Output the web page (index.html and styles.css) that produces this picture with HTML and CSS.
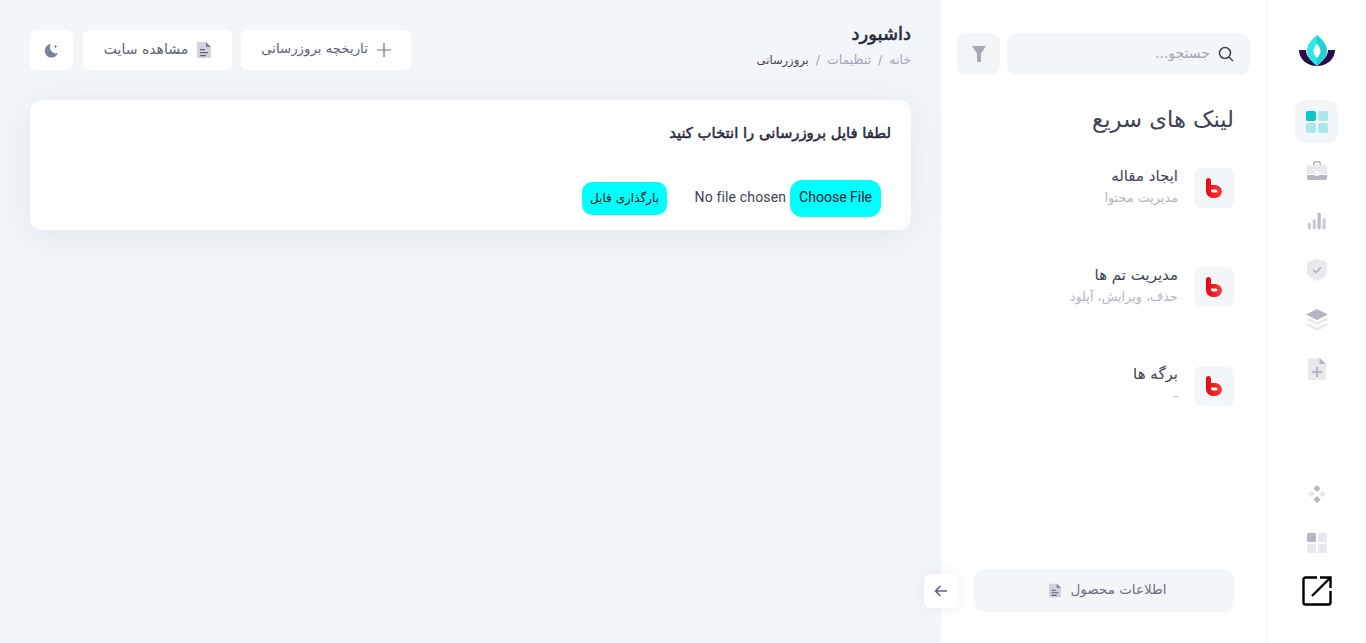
FILE: index.html
```html
<!DOCTYPE html>
<html lang="fa" dir="rtl">
<head>
  <meta charset="UTF-8" />
  <meta name="viewport" content="width=device-width, initial-scale=1.0"/>
  <title>داشبورد</title>
  <link rel="stylesheet" href="styles.css">
</head>

<body>
  <aside class="rail">
    <a class="logo" href="#">
      <svg width="38" height="33" viewBox="0 0 38 33">
        <path d="M1 16h7c0 6 5 11 11 15 6-4 11-9 11-15h7c0 9-8 16-18 16S1 25 1 16z" fill="#2b0a45"/>
        <path d="M19 1C13 6 9 11 9 17c0 6 5 11 10 15z" fill="#2ee6e6"/>
        <path d="M19 1c6 5 10 10 10 16 0 6-5 11-10 15z" fill="#22cfd2"/>
        <path d="M19 10c-2.500 2.500-3.500 5-3.500 7s1 4.500 3.500 7c2.500-2.500 3.500-5 3.500-7s-1-4.500-3.500-7z" fill="#fff"/>
      </svg>
    </a>
    <nav class="rail-nav">
      <a class="rail-btn active" href="#">
        <svg width="24" height="24" viewBox="0 0 24 24">
          <rect x="1" y="1" width="10" height="10" rx="2" fill="#0bc5c9"/>
          <rect x="13" y="1" width="10" height="10" rx="2" fill="#0bc5c9" opacity=".3"/>
          <rect x="1" y="13" width="10" height="10" rx="2" fill="#0bc5c9" opacity=".3"/>
          <rect x="13" y="13" width="10" height="10" rx="2" fill="#0bc5c9" opacity=".3"/>
        </svg>
      </a>
      <a class="rail-btn" href="#">
        <svg width="24" height="24" viewBox="0 0 24 24">
          <path d="M8 6V4.500C8 3 9 2 10.500 2h3C15 2 16 3 16 4.500V6h-1.500V4.500c0-.6-.4-1-1-1h-3c-.6 0-1 .4-1 1V6z" fill="#b5b5c3"/>
          <path d="M2 8c0-1.100.9-2 2-2h16c1.100 0 2 .9 2 2v7H2z" fill="#b5b5c3" opacity=".3"/>
          <path d="M2 16h20v3c0 1.100-.9 2-2 2H4c-1.100 0-2-.9-2-2z" fill="#b5b5c3"/>
          <rect x="10" y="12" width="4" height="5" rx="1" fill="#fff"/>
        </svg>
      </a>
      <a class="rail-btn" href="#">
        <svg width="22" height="22" viewBox="0 0 24 24">
          <rect x="2" y="14" width="3.500" height="7" rx="1.500" fill="#b5b5c3" opacity=".7"/>
          <rect x="7.300" y="10" width="3.500" height="11" rx="1.500" fill="#b5b5c3" opacity=".7"/>
          <rect x="12.600" y="3" width="3.500" height="18" rx="1.500" fill="#b5b5c3" opacity=".9"/>
          <rect x="18" y="9" width="3.500" height="12" rx="1.500" fill="#b5b5c3" opacity=".7"/>
        </svg>
      </a>
      <a class="rail-btn" href="#">
        <svg width="24" height="24" viewBox="0 0 24 24">
          <path d="M12 1l10 3v10c0 4-5 7-10 9C7 21 2 18 2 14V4z" fill="#b5b5c3" opacity=".3"/>
          <path d="M8 12l3 2.500 5-5" fill="none" stroke="#b5b5c3" stroke-width="1.800"/>
        </svg>
      </a>
      <a class="rail-btn" href="#">
        <svg width="24" height="24" viewBox="0 0 24 24">
          <path d="M12 1l11 5.500-11 5.500L1 6.500z" fill="#b5b5c3"/>
          <path d="M3.500 10L12 14.300 20.500 10 23 11.500 12 17 1 11.500z" fill="#b5b5c3" opacity=".3"/>
          <path d="M3.500 15.500L12 19.800l8.500-4.300 2.500 1.500L12 23 1 17z" fill="#b5b5c3" opacity=".3"/>
        </svg>
      </a>
      <a class="rail-btn" href="#">
        <svg width="24" height="24" viewBox="0 0 24 24">
          <path d="M4 1h11l6 6v15c0 .6-.4 1-1 1H4c-.6 0-1-.4-1-1V2c0-.6.4-1 1-1z" fill="#b5b5c3" opacity=".3"/>
          <path d="M14.500 1L21 7h-6.500z" fill="#b5b5c3"/>
          <path d="M11 10h2v4h4v2h-4v4h-2v-4H7v-2h4z" fill="#b5b5c3"/>
        </svg>
      </a>
    </nav>
    <div class="rail-bottom">
      <a class="rail-btn" href="#">
        <svg width="20" height="20" viewBox="0 0 20 20">
          <path d="M10 1l3.500 3.500L10 8 6.500 4.500z" fill="#b5b5c3"/>
          <path d="M10 12l3.500 3.500L10 19l-3.500-3.500z" fill="#b5b5c3"/>
          <path d="M4.500 6.500L8 10l-3.500 3.500L1 10z" fill="#b5b5c3" opacity=".3"/>
          <path d="M15.500 6.500L19 10l-3.500 3.500L12 10z" fill="#b5b5c3" opacity=".3"/>
        </svg>
      </a>
      <a class="rail-btn" href="#">
        <svg width="20" height="20" viewBox="0 0 20 20">
          <rect x="0" y="0" width="9" height="9" rx="1.500" fill="#b5b5c3"/>
          <rect x="11" y="0" width="9" height="9" rx="1.500" fill="#b5b5c3" opacity=".3"/>
          <rect x="0" y="11" width="9" height="9" rx="1.500" fill="#b5b5c3" opacity=".3"/>
          <rect x="11" y="11" width="9" height="9" rx="1.500" fill="#b5b5c3" opacity=".3"/>
        </svg>
      </a>
      <a class="rail-ext" href="#">
        <svg width="30" height="30" viewBox="0 0 30 30" fill="none" stroke="#000" stroke-width="2.400">
          <path d="M15 1.500H3.500a2 2 0 0 0-2 2v23a2 2 0 0 0 2 2h23a2 2 0 0 0 2-2V15"/>
          <path d="M10 20L28.500 1.500M18 1.500h10.500V12"/>
        </svg>
      </a>
    </div>
  </aside>

  <section class="panel">
    <div class="search-row">
      <label class="search">
        <svg width="16" height="16" viewBox="0 0 16 16" fill="none" stroke="#3f4254" stroke-width="1.500">
          <circle cx="7" cy="7" r="5.500"/>
          <path d="M11 11l4 4"/>
        </svg>
        <input type="text" placeholder="جستجو...">
      </label>
      <button class="filter-btn">
        <svg width="14" height="16" viewBox="0 0 14 16"><path d="M0 0h14L9 7.500V16H5V7.500z" fill="#a8a8b5"/></svg>
      </button>
    </div>

    <h2 class="panel-title">لینک های سریع</h2>

    <ul class="quick-links">
      <li class="quick-link">
        <span class="quick-icon">
          <svg width="16" height="20" viewBox="0 0 16 20"><use href="#brand"/></svg>
        </span>
        <div class="quick-text">
          <a href="#">ایجاد مقاله</a>
          <small>مدیریت محتوا</small>
        </div>
      </li>
      <li class="quick-link">
        <span class="quick-icon">
          <svg width="16" height="20" viewBox="0 0 16 20"><use href="#brand"/></svg>
        </span>
        <div class="quick-text">
          <a href="#">مدیریت تم ها</a>
          <small>حذف، ویرایش، آپلود</small>
        </div>
      </li>
      <li class="quick-link">
        <span class="quick-icon">
          <svg width="16" height="20" viewBox="0 0 16 20"><use href="#brand"/></svg>
        </span>
        <div class="quick-text">
          <a href="#">برگه ها</a>
          <small>-</small>
        </div>
      </li>
    </ul>

    <a class="product-btn" href="#">
      اطلاعات محصول
      <svg width="12" height="15" viewBox="0 0 14 16"><use href="#doc"/></svg>
    </a>

    <button class="collapse-btn">
      <svg width="14" height="12" viewBox="0 0 14 12" fill="none" stroke="#5e6278" stroke-width="1.600"><path d="M13 6H2M6.500 1L1.500 6l5 5"/></svg>
    </button>
  </section>

  <main class="main">
    <div class="topbar">
      <div>
        <h1>داشبورد</h1>
        <ol class="crumbs">
          <li>خانه</li>
          <li>/</li>
          <li>تنظیمات</li>
          <li>/</li>
          <li class="current">بروزرسانی</li>
        </ol>
      </div>
      <div class="top-actions">
        <a class="top-btn wide" href="#">
          <svg width="14" height="14" viewBox="0 0 14 14"><path d="M6.400 0h1.200v6.400H14v1.200H7.600V14H6.400V7.600H0V6.400h6.400z" fill="#6c7086"/></svg>
          تاریخچه بروزرسانی
        </a>
        <a class="top-btn" href="#">
          <svg width="14" height="16" viewBox="0 0 14 16"><use href="#doc"/></svg>
          مشاهده سایت
        </a>
        <a class="top-btn icon-only" href="#">
          <svg width="15" height="15" viewBox="0 0 15 15">
            <path d="M7 1a6.800 6.800 0 1 0 7 9A6 6 0 0 1 7 1z" fill="#7e8299"/>
            <path d="M11.500 1.500l.6 1.400 1.400.6-1.400.6-.6 1.400-.6-1.400-1.400-.6 1.400-.6z" fill="#7e8299"/>
          </svg>
        </a>
      </div>
    </div>

    <div class="card">
      <h3>لطفا فایل بروزرسانی را انتخاب کنید</h3>
      <form class="upload-form">
        <input type="file" class="file-input">
        <button type="submit" class="upload-btn">بارگذاری فایل</button>
      </form>
    </div>
  </main>

  <svg class="defs" width="0" height="0">
    <defs>
      <linearGradient id="brandFill" x1="0" y1="0" x2="1" y2="0">
        <stop offset="0" stop-color="#e4070f"/>
        <stop offset="1" stop-color="#ff3a3a"/>
      </linearGradient>
      <path id="brand" fill-rule="evenodd" d="M0 2.500a2.500 2.500 0 0 1 5 0V7h4a7 6.500 0 0 1 0 13H7a7 7 0 0 1-7-7zM5 11.500V13a2 2 0 0 0 2 1.500h3a1.500 1.500 0 0 0 0-3z" fill="url(#brandFill)"/>
      <g id="doc">
        <path d="M1 0h8l5 5v10c0 .6-.4 1-1 1H1c-.6 0-1-.4-1-1V1c0-.6.4-1 1-1z" fill="#b5b5c3" opacity=".6"/>
        <path d="M9 0l5 5H9z" fill="#7e8299"/>
        <path d="M3 7h5v1.300H3zM3 10h8v1.300H3zM3 13h6v1.300H3z" fill="#5e6278"/>
      </g>
    </defs>
  </svg>
</body>
</html>
```

FILE: styles.css
```css
* {
  box-sizing: border-box;
}

html,
body {
  height: 100%;
}

body {
  display: flex;
  margin: 0;
  overflow: hidden;
  background-color: #f3f6f9;
  color: #3f4254;
  font-family: "DejaVu Sans", sans-serif;
  font-size: 13px;
}

a {
  color: inherit;
  text-decoration: none;
}

button {
  font-family: inherit;
  cursor: pointer;
}

.defs {
  position: absolute;
}

/* right rail */
.rail {
  display: flex;
  flex-direction: column;
  align-items: center;
  flex: 0 0 100px;
  padding: 34px 0 37px;
  background-color: #fff;
  border-left: 1px solid #eef1f5;
}

.logo {
  display: flex;
  height: 33px;
  margin-bottom: 33px;
}

.rail-nav,
.rail-bottom {
  display: flex;
  flex-direction: column;
  align-items: center;
  gap: 6.500px;
}

.rail-bottom {
  margin-top: auto;
}

.rail-btn {
  display: flex;
  align-items: center;
  justify-content: center;
  width: 43px;
  height: 43px;
  border-radius: 9px;
}

.rail-btn.active {
  background-color: #f3f6f9;
}

.rail-ext {
  display: flex;
  margin-top: 5px;
}

/* quick links panel */
.panel {
  position: relative;
  z-index: 1;
  display: flex;
  flex-direction: column;
  flex: 0 0 325px;
  min-width: 0;
  padding: 33px 16px 31px;
  background-color: #fff;
}

.search-row {
  display: flex;
  gap: 7px;
}

.search {
  display: flex;
  align-items: center;
  gap: 8px;
  flex: 1;
  min-width: 0;
  height: 42px;
  padding: 0 16px;
  background-color: #f3f6f9;
  border-radius: 9px;
}

.search input {
  flex: 1;
  width: 100%;
  min-width: 0;
  padding: 0 0 3px;
  border: none;
  outline: none;
  background: none;
  font-family: inherit;
  font-size: 14px;
  color: #3f4254;
}

.search input::placeholder {
  color: #a1a5b7;
}

.filter-btn {
  display: flex;
  align-items: center;
  justify-content: center;
  flex: 0 0 43px;
  height: 42px;
  padding: 0;
  border: none;
  background-color: #f3f6f9;
  border-radius: 9px;
}

.panel-title {
  margin: 30px 16px 0 0;
  font-size: 22.700px;
  font-weight: 400;
  line-height: 28px;
  color: #3f4254;
}

.quick-links {
  margin: 35px 16px 0 0;
  padding: 0;
  list-style: none;
}

.quick-link {
  display: flex;
  gap: 16px;
  margin-bottom: 59px;
}

.quick-icon {
  display: flex;
  align-items: center;
  justify-content: center;
  flex: 0 0 40px;
  height: 40px;
  background-color: #f3f6f9;
  border-radius: 7px;
}

.quick-text {
  margin-top: -2px;
}

.quick-link a {
  display: block;
  font-size: 15px;
  line-height: 20px;
  color: #3f4254;
}

.quick-link small {
  display: block;
  margin-top: 2px;
  font-size: 12.800px;
  line-height: 20px;
  color: #b5b5c3;
}

.product-btn {
  display: flex;
  align-items: center;
  justify-content: center;
  gap: 9px;
  width: 260px;
  height: 43px;
  margin: auto 16px 0 0;
  padding: 0 0 3px 8px;
  background-color: #f3f6f9;
  border-radius: 9px;
  color: #6c7086;
  font-size: 13.500px;
}

.product-btn svg {
  margin-top: 3px;
}

.collapse-btn {
  position: absolute;
  left: -17px;
  bottom: 35px;
  display: flex;
  align-items: center;
  justify-content: center;
  width: 34px;
  height: 34px;
  padding: 0;
  border: none;
  background-color: #fff;
  border-radius: 6px;
  box-shadow: 0 0 16px rgba(82, 63, 105, 0.1);
}

/* main content */
.main {
  flex: 1;
  min-width: 0;
  padding: 0 30px;
}

.topbar {
  display: flex;
  justify-content: space-between;
  align-items: flex-start;
  padding-top: 20px;
  height: 100px;
}

h1 {
  margin: 0;
  font-size: 18px;
  font-weight: 400;
  line-height: 28px;
  color: #27293a;
  -webkit-text-stroke: 0.6px #27293a;
}

.crumbs {
  display: flex;
  gap: 7px;
  margin: 3px 0 0;
  padding: 0;
  list-style: none;
  font-size: 12.500px;
  line-height: 18px;
  color: #a1a5b7;
}

.crumbs .current {
  font-size: 11.500px;
  color: #3f4254;
}

.top-actions {
  display: flex;
  gap: 9px;
  margin-top: 10px;
}

.top-btn {
  display: flex;
  align-items: center;
  justify-content: center;
  gap: 9px;
  width: 149px;
  height: 40px;
  padding-bottom: 3px;
  background-color: #fff;
  border-radius: 7px;
  color: #5e6278;
  font-size: 14px;
}

.top-btn svg {
  margin-top: 3px;
}

.top-btn.wide {
  width: 170px;
  font-size: 13.300px;
}

.top-btn.icon-only {
  width: 43px;
  margin-right: 1px;
}

.card {
  height: 130px;
  padding: 21px 20px;
  background: linear-gradient(to left, #fbfcfc, #fff 40px);
  border-radius: 12px;
  box-shadow: 0 5px 40px rgba(60, 70, 100, 0.1);
}

.card h3 {
  margin: 0;
  font-size: 14.800px;
  font-weight: 400;
  line-height: 24px;
  color: #27293a;
  -webkit-text-stroke: 0.5px #27293a;
}

.upload-form {
  display: flex;
  align-items: center;
  margin-top: 35px;
  padding-right: 10px;
}

.file-input {
  width: 214px;
  font-family: Roboto, sans-serif;
  font-size: 14px;
  letter-spacing: 0.150px;
  color: #3f4254;
}

.file-input::file-selector-button {
  height: 37px;
  padding: 0 9px 3px;
  margin: 0 0 0 4px;
  border: none;
  background-color: #00ffff;
  border-radius: 12px;
  color: #1a1a2e;
  font-family: Roboto, sans-serif;
  font-size: 14px;
}

.upload-btn {
  height: 33px;
  padding: 0 8px 1px;
  border: none;
  background-color: #00ffff;
  border-radius: 10px;
  color: #111;
  font-size: 12px;
}
```
